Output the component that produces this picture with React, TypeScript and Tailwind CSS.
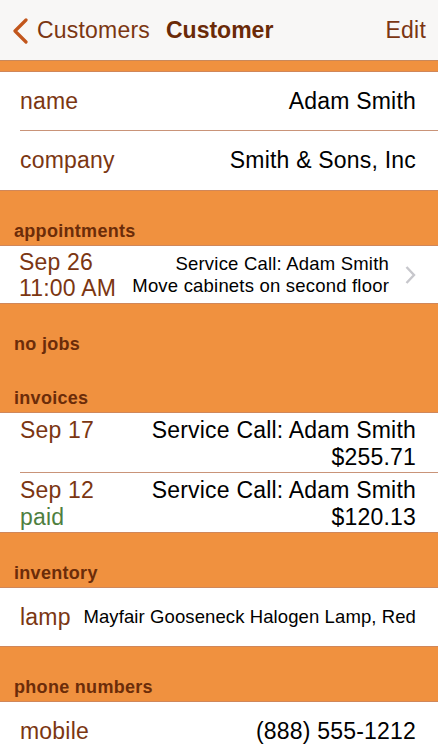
import React from "react";

const label = "text-[#7b3612]";
const value = "text-black";

function Header({ title }: { title: string }) {
  return (
    <div className="h-[54px] flex items-end px-[14px]">
      <span className="text-[18px] leading-[27px] font-bold text-[#6b2c09] tracking-[0.3px]">
        {title}
      </span>
    </div>
  );
}

function Row({
  children,
  last,
  className = "",
}: {
  children: React.ReactNode;
  last?: boolean;
  className?: string;
}) {
  return (
    <div className="pl-[20px]">
      <div
        className={`pr-[22px] ${last ? "" : "border-b border-[#c99479]"} ${className}`}
      >
        {children}
      </div>
    </div>
  );
}

function Section({ children }: { children: React.ReactNode }) {
  return (
    <div className="bg-white border-y border-[#d0875a]">{children}</div>
  );
}

function SimpleRow({
  name,
  val,
  last,
}: {
  name: string;
  val: string;
  last?: boolean;
}) {
  return (
    <Row last={last} className="h-[59px] flex items-center justify-between">
      <span className={`${label} text-[23px] tracking-[0.2px]`}>{name}</span>
      <span className={`${value} text-[23px] tracking-[0.2px]`}>{val}</span>
    </Row>
  );
}

export default function App() {
  return (
    <div
      className="w-[438px] h-[750px] overflow-hidden bg-[#f0913f]"
      style={{ fontFamily: '"Liberation Sans", Arial, sans-serif' }}
    >
      {/* nav bar */}
      <div className="h-[61px] bg-[#f8f7f6] border-b border-[#c9885b] flex items-center px-[12px] text-[23px] tracking-[0.2px]">
        <svg width="17" height="26" viewBox="0 0 17 26" className="mr-[8px] mt-[2px]">
          <path
            d="M14 2 L3 13 L14 24"
            fill="none"
            stroke="#c2561c"
            strokeWidth="3.2"
            strokeLinecap="round"
            strokeLinejoin="round"
          />
        </svg>
        <span className="text-[#7b3612]">Customers</span>
        <span className="ml-[16px] font-bold text-[#6a2a08] tracking-[0px]">Customer</span>
        <span className="ml-auto text-[#7b3612]">Edit</span>
      </div>

      <div className="h-[10px]" />

      <Section>
        <SimpleRow name="name" val="Adam Smith" />
        <SimpleRow name="company" val="Smith & Sons, Inc" last />
      </Section>

      <Header title="appointments" />
      <Section>
        <Row last className="h-[57px] flex items-center">
          <div className={`${label} text-[23px] leading-[26px] tracking-[0.2px] -ml-[1px]`}>
            <div>Sep 26</div>
            <div>11:00 AM</div>
          </div>
          <div className="ml-auto text-right text-[18.5px] leading-[22px] tracking-[0.2px] text-black">
            <div>Service Call: Adam Smith</div>
            <div>Move cabinets on second floor</div>
          </div>
          <svg width="11" height="20" viewBox="0 0 11 20" className="ml-[16px]">
            <path
              d="M1.5 2 L9 10 L1.5 18"
              fill="none"
              stroke="#c7c7cc"
              strokeWidth="2.4"
            />
          </svg>
        </Row>
      </Section>

      <Header title="no jobs" />
      <Header title="invoices" />
      <Section>
        <Row className="h-[60px] flex justify-between pt-[4px] text-[23px] leading-[27px] tracking-[0.2px]">
          <div className={label}>Sep 17</div>
          <div className="text-right text-black">
            <div>Service Call: Adam Smith</div>
            <div>$255.71</div>
          </div>
        </Row>
        <Row last className="h-[59px] flex justify-between pt-[4px] text-[23px] leading-[27px] tracking-[0.2px]">
          <div>
            <div className={label}>Sep 12</div>
            <div className="text-[#4f7f3f]">paid</div>
          </div>
          <div className="text-right text-black">
            <div>Service Call: Adam Smith</div>
            <div>$120.13</div>
          </div>
        </Row>
      </Section>

      <Header title="inventory" />
      <Section>
        <Row last className="h-[58px] flex items-center justify-between">
          <span className={`${label} text-[23px] tracking-[0.2px]`}>lamp</span>
          <span className="text-black text-[18.5px] tracking-[0.1px]">
            Mayfair Gooseneck Halogen Lamp, Red
          </span>
        </Row>
      </Section>

      <Header title="phone numbers" />
      <Section>
        <SimpleRow name="mobile" val="(888) 555-1212" last />
      </Section>
    </div>
  );
}
